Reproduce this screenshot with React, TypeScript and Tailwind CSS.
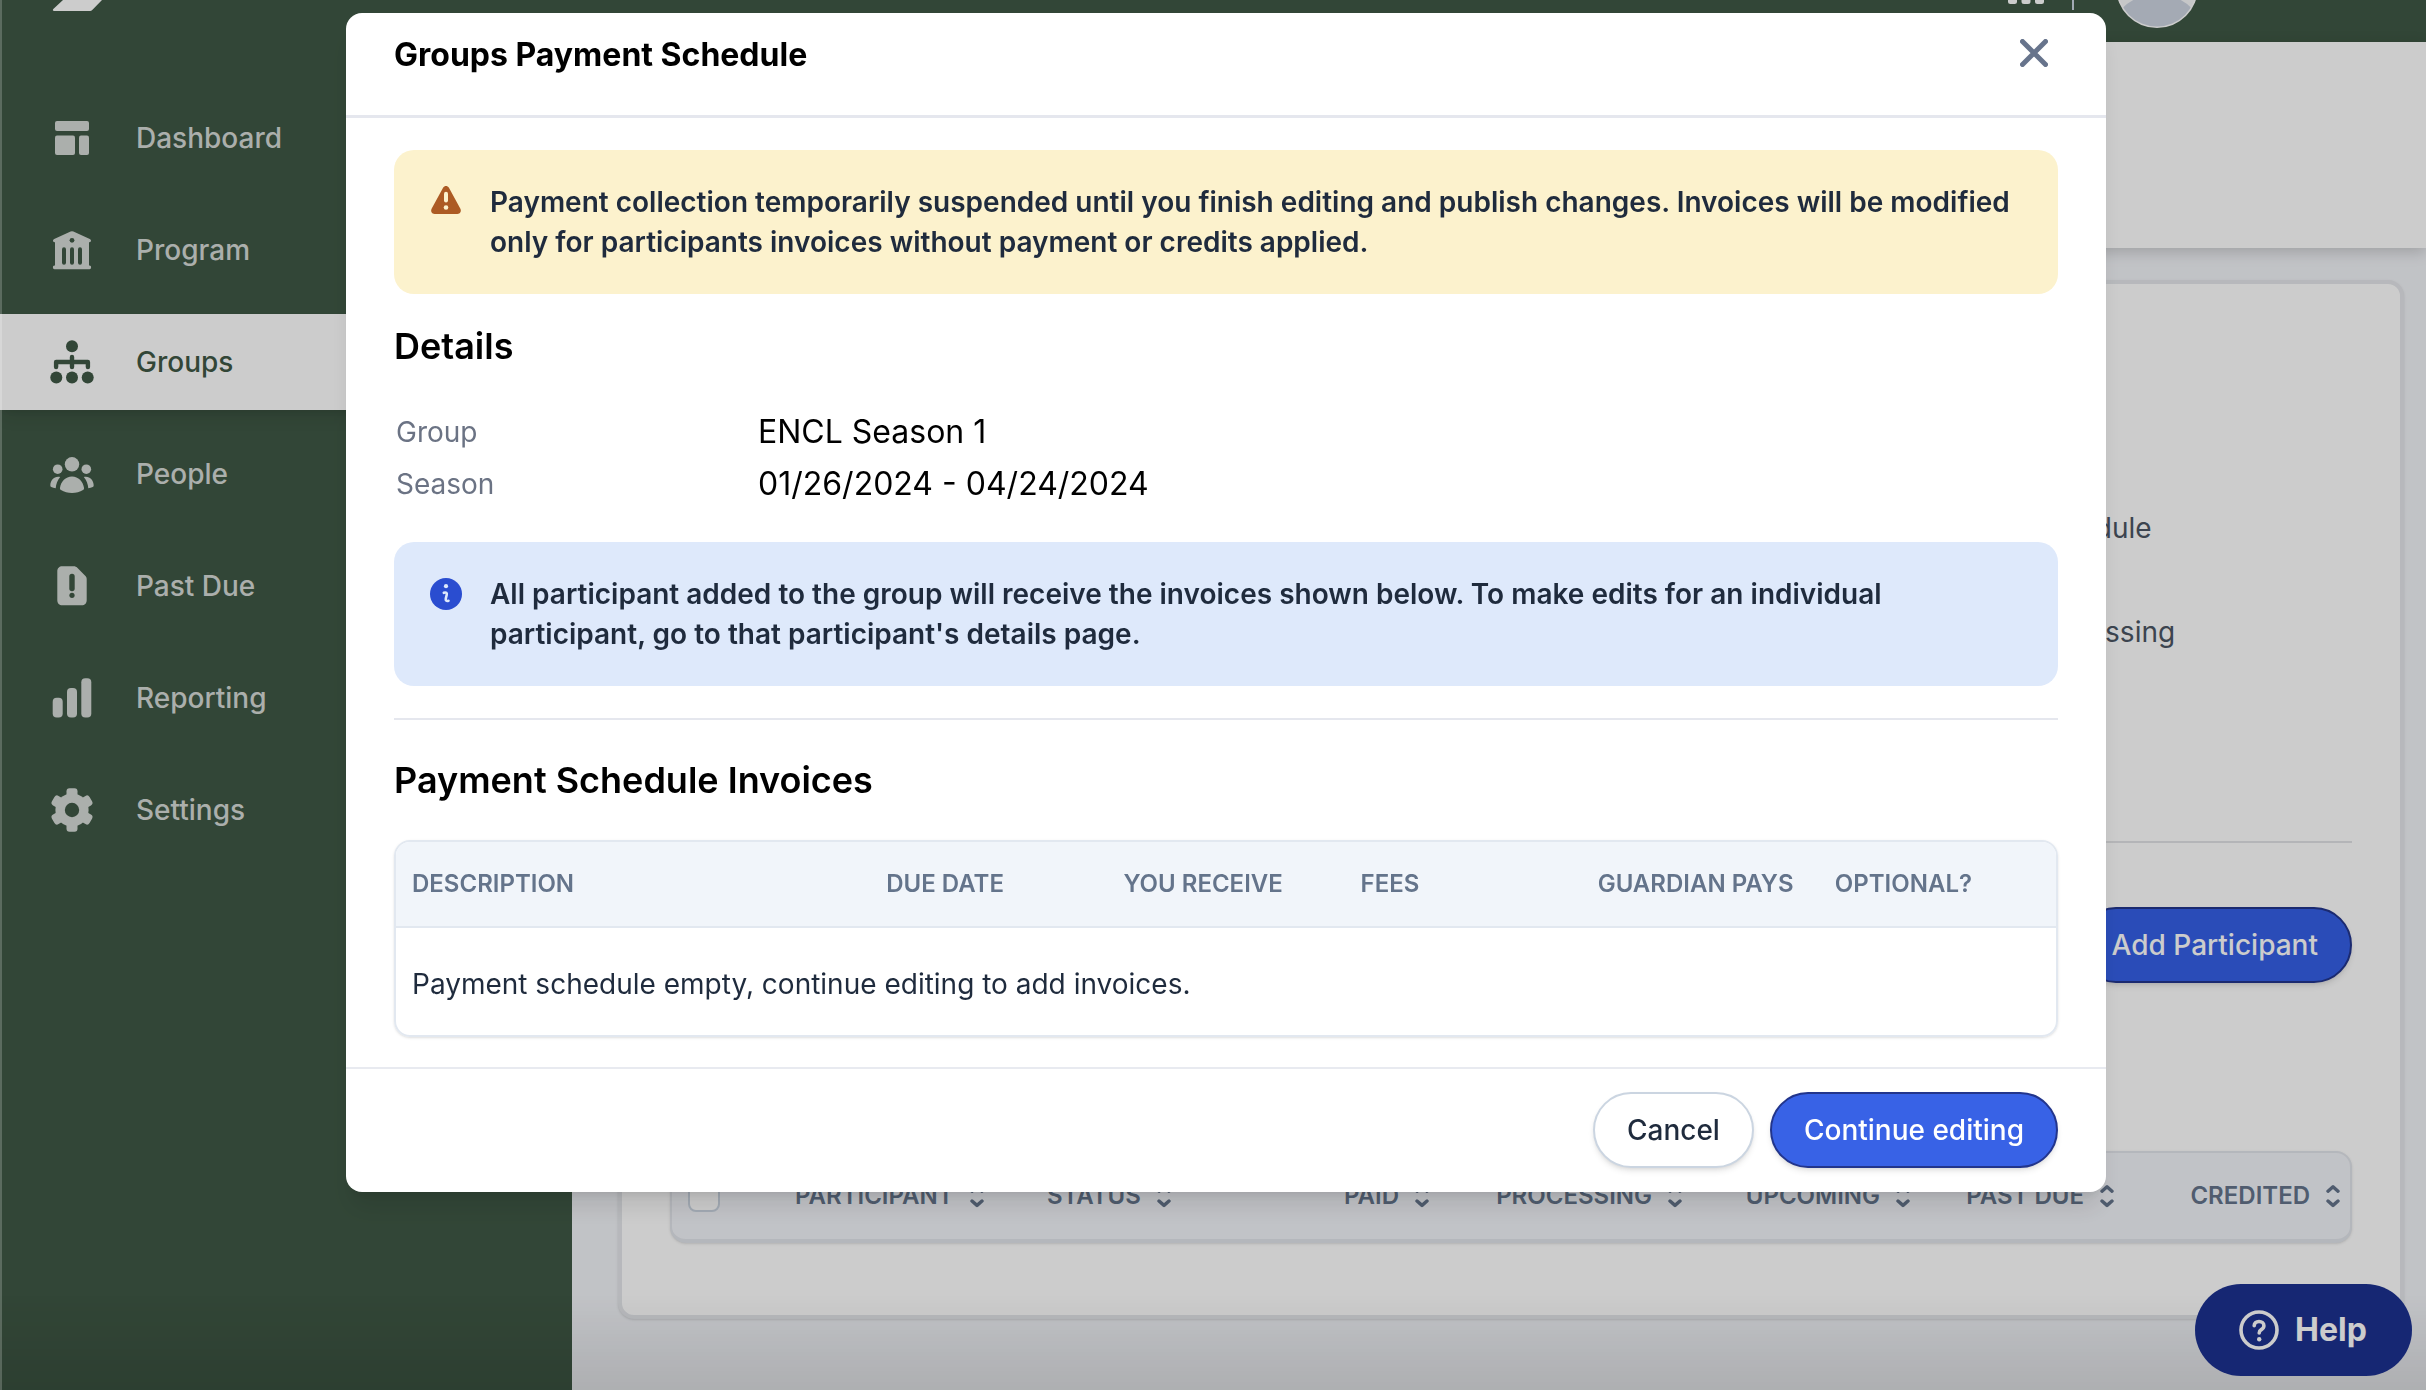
import React from "react";

function DashboardIcon() {
  return (
    <svg viewBox="0 0 44 44" className="size-11" fill="currentColor" aria-hidden="true">
      <rect x="5" y="5" width="34" height="10" rx="2" />
      <rect x="5" y="19.5" width="20" height="19.5" rx="2" />
      <rect x="29" y="19.5" width="10" height="19.5" rx="2" />
    </svg>
  );
}

function ProgramIcon() {
  return (
    <svg viewBox="0 0 44 44" className="size-11" fill="currentColor" aria-hidden="true">
      <path d="M20.6 3.5a3 3 0 0 1 2.8 0l16.4 7.4c.8.4 1.2.9 1.2 1.7 0 1-.6 1.7-1.6 1.7H39v23.2h.6c.9 0 1.5.7 1.5 1.8 0 1.300-.6 2-1.600 2h-35c-1 0-1.600-.7-1.600-2 0-1.100.6-1.800 1.500-1.800H5V14.300h-.4c-1 0-1.600-.7-1.600-1.700 0-.8.4-1.300 1.200-1.700z" />
      <g fill="#3f5845">
        <circle cx="22" cy="12.3" r="2.4" />
        <rect x="12" y="19.300" width="4" height="17.500" rx="2" />
        <rect x="20" y="19.300" width="4" height="17.500" rx="2" />
        <rect x="28" y="19.300" width="4" height="17.500" rx="2" />
      </g>
    </svg>
  );
}

function GroupsIcon() {
  return (
    <svg viewBox="0 0 44 44" className="size-11" fill="currentColor" aria-hidden="true">
      <circle cx="22" cy="6.300" r="6" />
      <circle cx="6.300" cy="37.600" r="6" />
      <circle cx="22" cy="37.600" r="6" />
      <circle cx="37.700" cy="37.600" r="6" />
      <path d="M6.100 27V22H37.900V27M22 17V27" fill="none" stroke="currentColor" strokeWidth="4.400" strokeLinecap="round" strokeLinejoin="round" />
    </svg>
  );
}

function PeopleIcon() {
  return (
    <svg viewBox="0 0 44 44" className="size-11" fill="currentColor" aria-hidden="true">
      <circle cx="22" cy="12.300" r="7.200" />
      <circle cx="7.700" cy="17.200" r="4.800" />
      <circle cx="36.300" cy="17.200" r="4.800" />
      <path d="M22 24.500c-6.500 0-11 5-12 11.200-.2 1 .2 1.800 1 2.400C14 40.200 18 41 22 41s8-.8 11-2.900c.8-.6 1.200-1.400 1-2.400-1-6.200-5.500-11.200-12-11.200z" />
      <path d="M10.200 25C4.500 23.600.6 28 .3 33.200c0 .9.300 1.500 1 1.900 1.300.7 2.700 1.100 4.400 1.200C6 32 7.500 28 10.200 25z" />
      <path d="M33.800 25c5.700-1.400 9.600 3 9.900 8.200 0 .9-.3 1.500-1 1.900-1.300.7-2.700 1.100-4.400 1.200-.3-4.300-1.800-8.300-4.500-11.300z" />
    </svg>
  );
}

function PastDueIcon() {
  return (
    <svg viewBox="0 0 44 44" className="size-11" fill="currentColor" aria-hidden="true">
      <path d="M12.300 2.300h11.500c1.400 0 2.500.5 3.500 1.500l7.900 8c1 1 1.500 2.100 1.500 3.500v21c0 3-2 5-5 5H12.300c-3 0-5-2-5-5v-29c0-3 2-5 5-5z" />
      <g fill="#3f5845">
        <rect x="19.300" y="9.800" width="5.400" height="17.400" rx="2.700" />
        <circle cx="22" cy="31.300" r="2.600" />
      </g>
    </svg>
  );
}

function ReportingIcon() {
  return (
    <svg viewBox="0 0 44 44" className="size-11" fill="currentColor" aria-hidden="true">
      <rect x="2.700" y="21.700" width="10" height="19.800" rx="4" />
      <rect x="17" y="12" width="10" height="29.500" rx="4" />
      <rect x="31.300" y="2.300" width="10" height="39.200" rx="4" />
    </svg>
  );
}

function SettingsIcon() {
  return (
    <svg viewBox="0 0 44 44" className="size-11" fill="currentColor" aria-hidden="true">
      <circle cx="22" cy="22" r="16.600" />
      <rect x="16.500" y="0.300" width="11" height="43.400" rx="3" />
      <rect x="16.500" y="0.300" width="11" height="43.400" rx="3" transform="rotate(60 22 22)" />
      <rect x="16.500" y="0.300" width="11" height="43.400" rx="3" transform="rotate(120 22 22)" />
      <circle cx="22" cy="22" r="7.200" fill="#3f5845" />
    </svg>
  );
}

function SortIcon() {
  return (
    <svg viewBox="0 0 14 24" className="h-6 w-3.5 shrink-0" fill="none" stroke="currentColor" strokeWidth="3.400" strokeLinecap="round" strokeLinejoin="round" aria-hidden="true">
      <path d="M2 7.200 7 2.800l5 4.400M2 17l5 4.400L12 17" />
    </svg>
  );
}

const navItems = [
  { label: "Dashboard", Icon: DashboardIcon },
  { label: "Program", Icon: ProgramIcon },
  { label: "Groups", Icon: GroupsIcon, active: true },
  { label: "People", Icon: PeopleIcon },
  { label: "Past Due", Icon: PastDueIcon },
  { label: "Reporting", Icon: ReportingIcon },
  { label: "Settings", Icon: SettingsIcon },
];

function Sidebar() {
  return (
    <aside className="w-[572px] shrink-0 bg-[#3f5845]">
      <div className="flex h-[90px] items-start px-[52px]">
        <svg viewBox="0 0 52 12" className="h-3 w-[52px]" aria-hidden="true">
          <path d="M11 0H50L40 10.200a2.500 2.500 0 0 1-1.800.8H2.200c-1.400 0-1.700-1-.9-2z" fill="#ffffff" />
        </svg>
      </div>
      <nav className="flex flex-col gap-4">
        {navItems.map(({ label, Icon, active }) => (
          <a
            key={label}
            href="#"
            className={
              active
                ? "flex h-24 items-center gap-[42px] bg-white pl-[50px] text-[28px] font-medium text-[#3f5845] shadow-lg"
                : "flex h-24 items-center gap-[42px] pl-[50px] text-[28px] font-medium text-[#d6dbd7]"
            }
          >
            <Icon />
            {label}
          </a>
        ))}
      </nav>
    </aside>
  );
}

const participantColumns = [
  { label: "Participant", width: "w-[252px]", align: "justify-start" },
  { label: "Status", width: "w-[240px]", align: "justify-start" },
  { label: "Paid", width: "w-[166px]", align: "justify-end" },
  { label: "Processing", width: "w-[253px]", align: "justify-end" },
  { label: "Upcoming", width: "w-[228px]", align: "justify-end" },
  { label: "Past Due", width: "w-[204px]", align: "justify-end" },
  { label: "Credited", width: "w-[226px]", align: "justify-end" },
];

function GroupPage() {
  return (
    <div className="flex min-w-0 flex-1 flex-col bg-[#f2f4f8]">
      <header className="flex h-[42px] items-start justify-end overflow-hidden bg-[#3f5845] pr-[228px]">
        <svg viewBox="0 0 36 4" className="mr-7 h-1 w-9" fill="#ffffff" aria-hidden="true">
          <path d="M0 0h9v1.500Q9 4 6.500 4h-4Q0 4 0 1.500zM13.500 0h9v1.500Q22.500 4 20 4h-4q-2.500 0-2.500-2.500zM27 0h9v1.500Q36 4 33.500 4h-4Q27 4 27 1.500z" />
        </svg>
        <div className="mr-[42px] h-2.5 w-0.5 bg-[#cbd5e1]" />
        <svg viewBox="0 0 82 29" className="h-[29px] w-[82px]" aria-hidden="true">
          <clipPath id="avatar-clip">
            <circle cx="41" cy="-13" r="39.500" />
          </clipPath>
          <circle cx="41" cy="-13" r="41" fill="#ffffff" />
          <g clipPath="url(#avatar-clip)">
            <rect width="82" height="29" fill="#f8f9fb" />
            <circle cx="41" cy="44" r="50" fill="#cdd5e2" />
          </g>
        </svg>
      </header>
      <div className="z-10 h-[206px] bg-white shadow-[0_4px_14px_rgba(0,0,0,0.18)]" />
      <main className="pt-8 pr-[22px] pb-16 pl-[46px]">
        <section className="rounded-2xl border-4 border-[#e5e7eb] bg-white px-12 pt-[222px] pb-[72px] shadow-sm">
          <ul className="ml-auto flex w-[324px] flex-col gap-[60px] text-[28px] leading-[44px] text-[#4b5563]">
            <li>Schedule</li>
            <li>Processing</li>
          </ul>
          <hr className="mt-[187px] border-t-2 border-[#e2e3e6]" />
          <div className="mt-16 flex justify-end">
            <button className="h-[76px] rounded-full border-2 border-[#22358c] bg-[#3560e6] px-8 text-[28px] font-medium text-white shadow-md">
              Add Participant
            </button>
          </div>
          <div className="mt-[168px] overflow-hidden rounded-2xl border-2 border-b-4 border-[#e2e5eb] bg-[#f2f4f9] shadow-sm">
            <table className="h-[86px] w-full table-fixed text-2xl font-semibold text-[#64748b] uppercase">
              <thead>
                <tr>
                  <th className="w-[113px] pl-4 text-left">
                    <input
                      type="checkbox"
                      aria-label="Select all participants"
                      className="block size-8 appearance-none rounded-lg border-2 border-[#cbd5e1] bg-white"
                    />
                  </th>
                  {participantColumns.map(({ label, width, align }) => (
                    <th key={label} className={width}>
                      <button className={`flex w-full items-center gap-4 pr-[14px] pl-[10px] font-semibold whitespace-nowrap uppercase ${align}`}>
                        {label}
                        <SortIcon />
                      </button>
                    </th>
                  ))}
                </tr>
              </thead>
            </table>
          </div>
        </section>
      </main>
    </div>
  );
}

function HelpButton() {
  return (
    <button className="fixed right-[14px] bottom-[14px] z-20 flex h-[92px] w-[217px] items-center gap-4 rounded-full bg-[#1c3190] pl-11 text-[32px] font-bold text-white">
      <svg viewBox="0 0 40 40" className="size-10" fill="none" stroke="currentColor" strokeWidth="3.600" strokeLinecap="round" aria-hidden="true">
        <circle cx="20" cy="20" r="18" />
        <path d="M15.200 15.800c0-2.600 2-4.300 4.800-4.300s4.900 1.700 4.900 4.200c0 1.900-1 2.900-2.600 3.900-1.500.9-2.100 1.600-2.100 3.400" />
        <circle cx="20.200" cy="29.300" r="2.200" fill="currentColor" stroke="none" />
      </svg>
      Help
    </button>
  );
}

function WarningIcon() {
  return (
    <svg viewBox="0 0 32 32" className="mt-0.5 size-8 shrink-0" aria-hidden="true">
      <path d="M13.200 3.600c1.200-2.200 4.400-2.200 5.600 0L30.400 24.800c1.200 2.300-.2 5.200-3 5.200H4.600c-2.800 0-4.200-2.900-3-5.200z" fill="#ac5b24" />
      <path d="M16 9.700v6.800" stroke="#fcf2cd" strokeWidth="4" strokeLinecap="round" />
      <circle cx="16" cy="23.500" r="2.300" fill="#fcf2cd" />
    </svg>
  );
}

function InfoIcon() {
  return (
    <svg viewBox="0 0 32 32" className="mt-1 size-8 shrink-0" aria-hidden="true">
      <circle cx="16" cy="16" r="16" fill="#2a4dd0" />
      <circle cx="16" cy="8.200" r="2.100" fill="#dee9fb" />
      <path d="M13.800 14.800c2.400-1 3.400.2 2.900 2.100l-.9 3.600c-.4 1.900.6 3.100 2.700 2.300" fill="none" stroke="#dee9fb" strokeWidth="2.600" strokeLinecap="round" />
    </svg>
  );
}

const invoiceColumns = ["Description", "Due date", "You receive", "Fees", "Guardian pays", "Optional?"];

function PaymentScheduleModal() {
  return (
    <div className="fixed inset-0 z-30 flex items-start justify-center bg-black/20 pt-[13px] pl-[26px]">
      <div role="dialog" aria-labelledby="modal-title" className="w-full max-w-[1760px] rounded-2xl bg-white shadow-xl">
        <div className="flex items-start justify-between border-b-[3px] border-[#e5e7ee] px-12 pt-[18px] pb-9">
          <h2 id="modal-title" className="text-[32px] leading-[48px] font-bold">Groups Payment Schedule</h2>
          <button aria-label="Close" className="px-2.5 py-2">
            <svg viewBox="0 0 28 28" className="size-7" fill="none" stroke="#67748c" strokeWidth="5" strokeLinecap="round" aria-hidden="true">
              <path d="M2.500 2.500l23 23M25.500 2.500l-23 23" />
            </svg>
          </button>
        </div>

        <div className="px-12 pt-8 pb-[30px]">
          <div className="flex gap-7 rounded-[20px] bg-[#fcf2cd] px-9 py-8 text-[28px] leading-10 font-semibold text-[#1f2b3d]">
            <WarningIcon />
            <p>
              Payment collection temporarily suspended until you finish editing and publish changes. Invoices will be modified
              only for participants invoices without payment or credits applied.
            </p>
          </div>

          <h3 className="mt-7 text-4xl leading-[48px] font-semibold">Details</h3>
          <dl className="mt-9 grid grid-cols-[362px_1fr] pl-0.5 text-[32px] leading-[52px]">
            <dt className="text-[28px] text-[#6b7384]">Group</dt>
            <dd>ENCL Season 1</dd>
            <dt className="text-[28px] text-[#6b7384]">Season</dt>
            <dd>01/26/2024 - 04/24/2024</dd>
          </dl>

          <div className="mt-8 flex gap-7 rounded-[20px] bg-[#dee9fb] px-9 py-8 text-[28px] leading-10 font-semibold text-[#1f2b3d]">
            <InfoIcon />
            <p>
              All participant added to the group will receive the invoices shown below. To make edits for an individual
              participant, go to that participant's details page.
            </p>
          </div>

          <hr className="mt-8 border-t-2 border-[#e5e7ee]" />

          <h3 className="mt-9 text-4xl leading-[48px] font-semibold">Payment Schedule Invoices</h3>
          <div className="mt-9 overflow-hidden rounded-2xl border-2 border-[#e2e8f0] shadow-sm">
            <table className="w-full table-fixed text-left">
              <thead className="border-b-2 border-[#e2e8f0] bg-[#f1f5fa] text-2xl text-[#64748b] uppercase">
                <tr className="h-[85px]">
                  {invoiceColumns.map((label) => (
                    <th
                      key={label}
                      className={label === "Description" ? "w-2/7 pl-4 font-semibold" : "w-1/7 pl-4 font-semibold whitespace-nowrap"}
                    >
                      {label}
                    </th>
                  ))}
                </tr>
              </thead>
              <tbody>
                <tr className="h-[108px]">
                  <td colSpan={6} className="pt-1 pl-4 text-[28px] text-[#1f2b3d]">
                    Payment schedule empty, continue editing to add invoices.
                  </td>
                </tr>
              </tbody>
            </table>
          </div>
        </div>

        <div className="flex justify-end gap-4 border-t-2 border-[#e8eaf0] px-12 pt-[23px] pb-6 text-[28px] font-medium">
          <button className="h-[76px] rounded-full border-2 border-[#cbd5e1] bg-white px-8 text-[#1f2b3d] shadow-md">Cancel</button>
          <button className="h-[76px] rounded-full border-2 border-[#22358c] bg-[#3862e6] px-8 text-white shadow-md">Continue editing</button>
        </div>
      </div>
    </div>
  );
}

export default function App() {
  return (
    <div className="relative flex min-h-screen font-['Inter',sans-serif] text-black">
      <Sidebar />
      <GroupPage />
      <div className="pointer-events-none fixed inset-x-0 bottom-0 h-24 bg-linear-to-t from-black/10 to-transparent" />
      <HelpButton />
      <PaymentScheduleModal />
      <div className="pointer-events-none fixed inset-y-0 left-0 z-40 w-0.5 bg-white/20" />
    </div>
  );
}
